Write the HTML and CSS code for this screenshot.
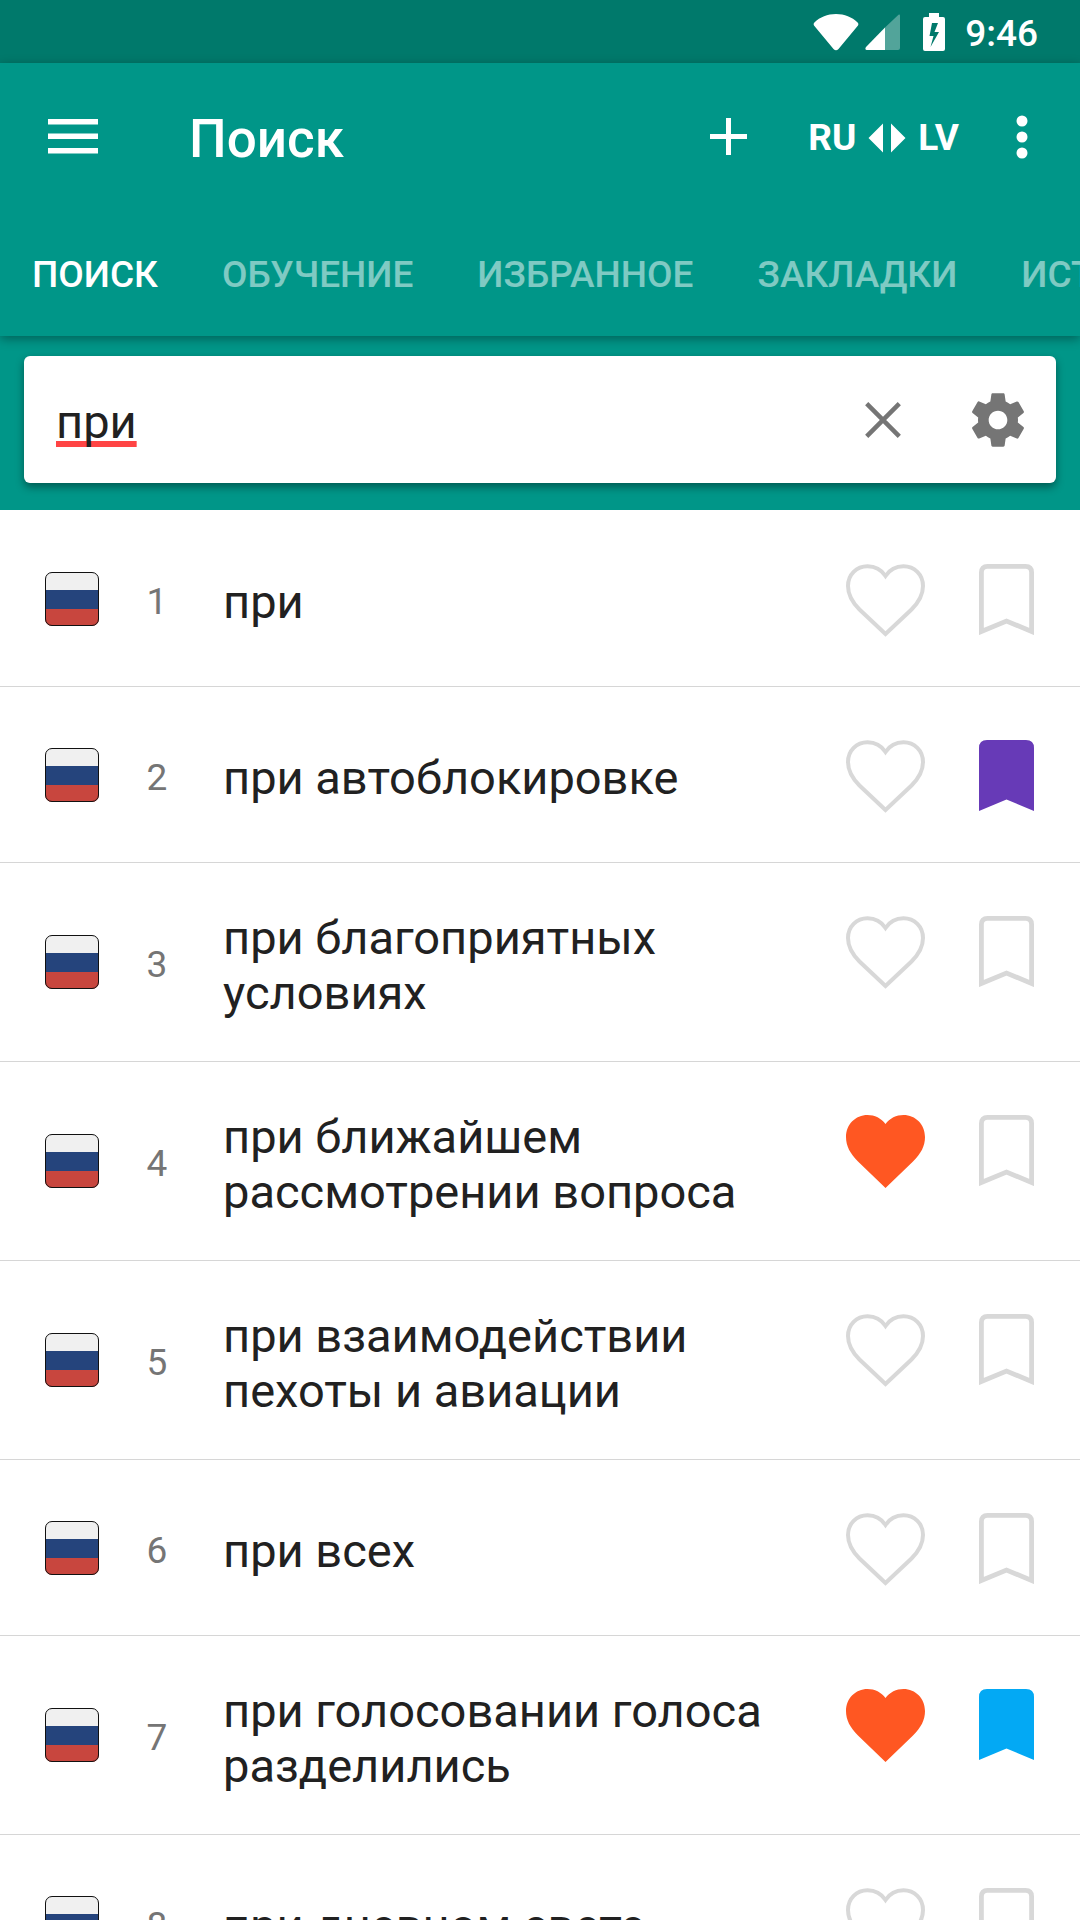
FILE: index.html
```html
<!DOCTYPE html>
<html lang="ru">
<head>
<meta charset="utf-8">
<meta name="viewport" content="width=device-width, initial-scale=1">
<title>Поиск</title>
<link rel="stylesheet" href="styles.css">
</head>
<body>
<svg class="defs" aria-hidden="true">
  <symbol id="flag-ru" viewBox="0 0 54 54">
    <clipPath id="flag-clip"><rect x="0" y="0" width="54" height="54" rx="7"/></clipPath>
    <g clip-path="url(#flag-clip)">
      <path fill="#f0f0f0" d="M0 0h54v18H0z"/>
      <path fill="#25447c" d="M0 18h54v19H0z"/>
      <path fill="#c8463e" d="M0 37h54v17H0z"/>
    </g>
    <rect x=".5" y=".5" width="53" height="53" rx="6.5" fill="none" stroke="#111"/>
  </symbol>
  <symbol id="heart" viewBox="0 0 79 73">
    <path fill="none" stroke="#d8d8d8" stroke-width="4" d="M39.5 70L13.500 45.500C6 38 2 30.500 2 22C2 10.500 10.500 2.300 21.500 2.300C29 2.300 35.500 6 39.500 12C43.500 6 50 2.300 57.500 2.300C68.500 2.300 77 10.500 77 22C77 30.500 73 38 65.500 45.500Z"/>
  </symbol>
  <symbol id="heart-on" viewBox="0 0 79 73">
    <path fill="#ff5722" d="M39.500 73L12 46.500C4 38.500 0 31 0 22C0 9.500 9.500 0 21.500 0C28.500 0 35.500 3.300 39.500 9C43.500 3.300 50.500 0 57.500 0C69.500 0 79 9.500 79 22C79 31 75 38.500 67 46.500Z"/>
  </symbol>
  <symbol id="mark" viewBox="0 0 55 71">
    <path fill="none" stroke="#d8d8d8" stroke-width="4.800" d="M2.400 67.500V8.500Q2.400 2.400 8.500 2.400H46.500Q52.600 2.400 52.600 8.500V67.500L27.500 57Z"/>
  </symbol>
  <symbol id="mark-on" viewBox="0 0 55 71">
    <path fill="currentColor" d="M0 71V8Q0 0 8 0H47Q55 0 55 8V71L27.500 59.500Z"/>
  </symbol>
</svg>

<div class="app">
  <div class="status">
    <svg class="status-wifi" width="46" height="38" viewBox="0 0 46 38"><path fill="#fff" d="M1.400 9.500C7 4 14.500 1 23 1s16 3 21.600 8.500q1.400 1.500.2 3.300L25.500 36q-2.500 2.600-5 0L1.200 12.800q-1.200-1.800.2-3.300z"/></svg>
    <svg class="status-signal" width="36" height="38" viewBox="0 0 36 38"><path fill="#fff" fill-opacity=".32" d="M20 14.500L33.500 1.700Q35 .8 35 2.500V35q0 2-2 2H20z"/><path fill="#fff" d="M20 14.500V37H1.500Q-.5 36.500 1 34z"/></svg>
    <svg class="status-battery" width="22" height="38" viewBox="0 0 22 38"><path fill="#fff" fill-rule="evenodd" d="M6 0h10v4h4q2 0 2 2v30q0 2-2 2H2q-2 0-2-2V6q0-2 2-2h4zM9 10L6.500 23h4L7.500 34 16 19h-4.500L15 10z"/></svg>
    <span class="clock">9:46</span>
  </div>

  <header class="appbar">
    <div class="toolbar">
      <button class="icon-button" aria-label="Меню"><svg width="50" height="35" viewBox="0 0 50 35"><path fill="#fff" d="M0 0h50v5.500H0zM0 14.500h50V20H0zM0 29h50v5.500H0z"/></svg></button>
      <h1 class="title">Поиск</h1>
      <button class="icon-button" aria-label="Добавить"><svg width="37" height="37" viewBox="0 0 37 37"><path fill="#fff" d="M16 0h5v16h16v5H21v16h-5V21H0v-5h16z"/></svg></button>
      <button class="lang-button" aria-label="Сменить направление: RU – LV">
        <span>RU</span>
        <svg width="38" height="30" viewBox="0 0 38 30"><path fill="#fff" d="M15 .5v29L.5 15zM23 .5v29L37.500 15z"/></svg>
        <span>LV</span>
      </button>
      <button class="icon-button more" aria-label="Ещё"><svg width="12" height="44" viewBox="0 0 12 44"><g fill="#fff"><circle cx="6" cy="6" r="5.500"/><circle cx="6" cy="22" r="5.500"/><circle cx="6" cy="38" r="5.500"/></g></svg></button>
    </div>
    <nav class="tabs">
      <a class="tab tab-active" href="#search" aria-current="page">ПОИСК</a>
      <a class="tab" href="#learn">ОБУЧЕНИЕ</a>
      <a class="tab" href="#favorites">ИЗБРАННОЕ</a>
      <a class="tab" href="#bookmarks">ЗАКЛАДКИ</a>
      <a class="tab" href="#history">ИСТОРИЯ</a>
    </nav>
  </header>

  <form class="search">
    <div class="search-card">
      <input class="search-input" type="text" value="при" aria-label="Поиск" spellcheck="false">
      <button class="icon-button" type="button" aria-label="Очистить"><svg width="36" height="36" viewBox="0 0 36 36"><path stroke="#757575" stroke-width="4.500" d="M1.700 1.700l32.600 32.600M34.300 1.700L1.700 34.300"/></svg></button>
      <button class="icon-button" type="button" aria-label="Настройки"><svg width="64" height="64" viewBox="0 0 24 24"><path fill="#757575" d="M19.430 12.980c.04-.32.07-.64.07-.98s-.03-.66-.07-.98l2.110-1.650c.19-.15.24-.42.12-.64l-2-3.460c-.12-.22-.39-.3-.61-.22l-2.490 1c-.52-.4-1.080-.73-1.690-.98l-.38-2.650C14.460 2.180 14.250 2 14 2h-4c-.25 0-.46.18-.49.42l-.38 2.650c-.61.25-1.170.59-1.690.98l-2.490-1c-.23-.09-.49 0-.61.22l-2 3.460c-.13.22-.07.49.12.64l2.110 1.650c-.04.32-.07.65-.07.98s.03.66.07.98l-2.110 1.650c-.19.15-.24.42-.12.64l2 3.460c.12.22.39.3.61.22l2.490-1c.52.4 1.080.73 1.690.98l.38 2.650c.03.24.24.42.49.42h4c.25 0 .46-.18.49-.42l.38-2.650c.61-.25 1.170-.59 1.690-.98l2.490 1c.23.09.49 0 .61-.22l2-3.460c.12-.22.07-.49-.12-.64l-2.110-1.650zM12 15.500c-1.930 0-3.500-1.570-3.500-3.500s1.570-3.500 3.500-3.500 3.500 1.570 3.500 3.500-1.570 3.500-3.500 3.500z"/></svg></button>
    </div>
  </form>

  <main class="results">
    <ol class="list">
      <li class="row">
        <svg class="flag"><use href="#flag-ru"/></svg><span class="rank">1</span><span class="phrase">при</span>
        <button class="action" aria-label="В избранное"><svg class="heart"><use href="#heart"/></svg></button>
        <button class="action" aria-label="Закладка"><svg class="mark"><use href="#mark"/></svg></button>
      </li>
      <li class="row">
        <svg class="flag"><use href="#flag-ru"/></svg><span class="rank">2</span><span class="phrase">при автоблокировке</span>
        <button class="action" aria-label="В избранное"><svg class="heart"><use href="#heart"/></svg></button>
        <button class="action" aria-label="Закладка" aria-pressed="true"><svg class="mark mark-purple"><use href="#mark-on"/></svg></button>
      </li>
      <li class="row">
        <svg class="flag"><use href="#flag-ru"/></svg><span class="rank">3</span><span class="phrase">при благоприятных условиях</span>
        <button class="action" aria-label="В избранное"><svg class="heart"><use href="#heart"/></svg></button>
        <button class="action" aria-label="Закладка"><svg class="mark"><use href="#mark"/></svg></button>
      </li>
      <li class="row">
        <svg class="flag"><use href="#flag-ru"/></svg><span class="rank">4</span><span class="phrase">при ближайшем рассмотрении вопроса</span>
        <button class="action" aria-label="В избранное" aria-pressed="true"><svg class="heart"><use href="#heart-on"/></svg></button>
        <button class="action" aria-label="Закладка"><svg class="mark"><use href="#mark"/></svg></button>
      </li>
      <li class="row">
        <svg class="flag"><use href="#flag-ru"/></svg><span class="rank">5</span><span class="phrase">при взаимодействии пехоты и авиации</span>
        <button class="action" aria-label="В избранное"><svg class="heart"><use href="#heart"/></svg></button>
        <button class="action" aria-label="Закладка"><svg class="mark"><use href="#mark"/></svg></button>
      </li>
      <li class="row">
        <svg class="flag"><use href="#flag-ru"/></svg><span class="rank">6</span><span class="phrase">при всех</span>
        <button class="action" aria-label="В избранное"><svg class="heart"><use href="#heart"/></svg></button>
        <button class="action" aria-label="Закладка"><svg class="mark"><use href="#mark"/></svg></button>
      </li>
      <li class="row">
        <svg class="flag"><use href="#flag-ru"/></svg><span class="rank">7</span><span class="phrase">при голосовании голоса разделились</span>
        <button class="action" aria-label="В избранное" aria-pressed="true"><svg class="heart"><use href="#heart-on"/></svg></button>
        <button class="action" aria-label="Закладка" aria-pressed="true"><svg class="mark mark-blue"><use href="#mark-on"/></svg></button>
      </li>
      <li class="row">
        <svg class="flag"><use href="#flag-ru"/></svg><span class="rank">8</span><span class="phrase">при дневном свете</span>
        <button class="action" aria-label="В избранное"><svg class="heart"><use href="#heart"/></svg></button>
        <button class="action" aria-label="Закладка"><svg class="mark"><use href="#mark"/></svg></button>
      </li>
    </ol>
  </main>
</div>
</body>
</html>
```

FILE: styles.css
```css
* {
  box-sizing: border-box;
}

body {
  margin: 0;
  background: #fff;
  color: #212121;
  font-family: Roboto, "Noto Sans", sans-serif;
}

button {
  margin: 0;
  padding: 0;
  border: 0;
  background: none;
  color: inherit;
  font: inherit;
  cursor: pointer;
}

svg {
  display: block;
  flex: none;
}

.defs {
  position: absolute;
  width: 0;
  height: 0;
}

.app {
  display: flex;
  flex-direction: column;
  height: 100vh;
}

/* Status bar */
.status {
  display: flex;
  flex: none;
  align-items: center;
  justify-content: flex-end;
  height: 63px;
  padding-right: 42px;
  background: #00796b;
  color: #fff;
}

.status-signal {
  margin-left: 6px;
}

.status-battery {
  margin-left: 22px;
}

.clock {
  margin-left: 20px;
  padding-top: 3px;
  font-size: 37px;
  font-weight: 500;
  line-height: 43px;
}

/* App bar */
.appbar {
  position: relative;
  z-index: 1;
  flex: none;
  background: #009688;
  box-shadow: 0 3px 10px rgba(0, 0, 0, 0.35);
  color: #fff;
}

.toolbar {
  display: flex;
  align-items: center;
  height: 147px;
  padding: 0 52px 0 48px;
}

.title {
  flex: 1;
  margin: 0 0 0 91px;
  padding-top: 4px;
  font-size: 53px;
  font-weight: 500;
  line-height: 62px;
}

.lang-button {
  display: flex;
  align-items: center;
  gap: 12px;
  margin-left: 61px;
  padding-top: 2px;
  font-size: 37px;
  font-weight: 700;
  line-height: 44px;
}

.more {
  margin-left: 57px;
}

.tabs {
  display: flex;
  height: 126px;
  overflow-x: auto;
  scrollbar-width: none;
}

.tab {
  display: flex;
  flex: none;
  align-items: center;
  padding: 4px 32px 0;
  color: rgba(255, 255, 255, 0.5);
  font-size: 37px;
  font-weight: 500;
  line-height: 44px;
  text-decoration: none;
}

.tab-active {
  color: #fff;
}

/* Search field */
.search {
  flex: none;
  padding: 20px 24px 27px;
  background: #009688;
}

.search-card {
  display: flex;
  align-items: center;
  height: 127px;
  padding: 0 26px 0 32px;
  border-radius: 6px;
  background: #fff;
  box-shadow: 0 4px 9px rgba(0, 0, 0, 0.4);
}

.search-input {
  flex: 1;
  min-width: 0;
  height: 64px;
  margin-right: 32px;
  padding: 4px 0 0;
  border: 0;
  outline: 0;
  background: none;
  color: #212121;
  font: 400 47px/60px Roboto, "Noto Sans", sans-serif;
  text-decoration: underline #f44;
  text-decoration-skip-ink: none;
  text-decoration-thickness: 6px;
  text-underline-offset: 3px;
}

.search .icon-button + .icon-button {
  margin-left: 65px;
}

/* Results */
.results {
  flex: 1;
  min-height: 0;
  overflow-y: auto;
  scrollbar-width: none;
}

.list {
  margin: 0;
  padding: 1px 0 0;
  list-style: none;
}

.row {
  display: grid;
  grid-template-columns: 54px 116px 1fr 121px 121px;
  align-items: center;
  min-height: 176px;
  padding: 0 13px 0 45px;
  border-bottom: 1px solid #d6d6d6;
}

.flag {
  width: 54px;
  height: 54px;
}

.rank {
  padding-top: 6px;
  color: #757575;
  font-size: 37px;
  line-height: 44px;
  text-align: center;
}

.phrase {
  padding: 47px 0 41px 8px;
  font-size: 47px;
  line-height: 55px;
}

.action {
  display: flex;
  align-self: start;
  justify-content: center;
  height: 175px;
  padding-top: 53px;
}

.heart {
  width: 79px;
  height: 73px;
}

.mark {
  width: 55px;
  height: 71px;
}

.mark-purple {
  color: #673ab7;
}

.mark-blue {
  color: #03a9f4;
}
```
